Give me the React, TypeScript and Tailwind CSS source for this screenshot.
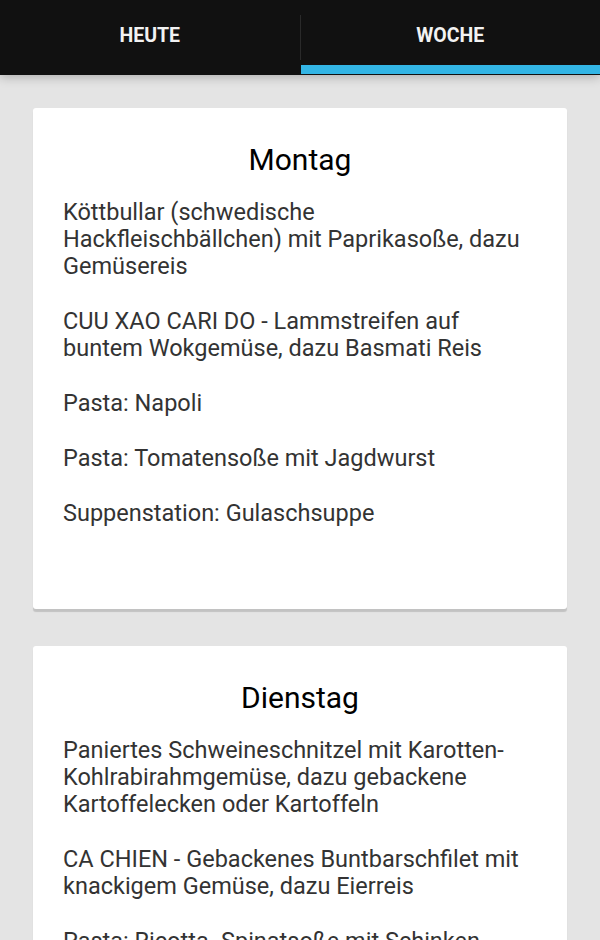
import React from 'react';

const days: { name: string; meals: string[] }[] = [
  {
    name: 'Montag',
    meals: [
      'Köttbullar (schwedische Hackfleischbällchen) mit Paprikasoße, dazu Gemüsereis',
      'CUU XAO CARI DO - Lammstreifen auf buntem Wokgemüse, dazu Basmati Reis',
      'Pasta: Napoli',
      'Pasta: Tomatensoße mit Jagdwurst',
      'Suppenstation: Gulaschsuppe',
    ],
  },
  {
    name: 'Dienstag',
    meals: [
      'Paniertes Schweineschnitzel mit Karotten-Kohlrabirahmgemüse, dazu gebackene Kartoffelecken oder Kartoffeln',
      'CA CHIEN - Gebackenes Buntbarschfilet mit knackigem Gemüse, dazu Eierreis',
      'Pasta: Ricotta- Spinatsoße mit Schinken',
      'Pasta: Napoli',
      'Suppenstation: Kartoffelsuppe',
    ],
  },
];

export default function App() {
  return (
    <div className="h-[940px] overflow-hidden bg-[#e4e4e4] font-['Roboto',sans-serif]">
      {/* Tabs */}
      <div className="relative flex h-[75px] bg-[#111111] shadow-[0_2px_10px_rgba(0,0,0,0.25)]">
        <div className="flex flex-1 items-center justify-center pb-[4px] text-[19.5px] font-bold text-[#f2f2f2]">
          HEUTE
        </div>
        <div className="my-[15px] w-px bg-[#2a2a2a]" />
        <div className="relative flex flex-1 items-center justify-center pb-[4px] text-[19.5px] font-bold text-[#f2f2f2]">
          WOCHE
          <div className="absolute bottom-[1px] left-0 right-0 h-[9px] bg-[#33b5e5]" />
        </div>
      </div>

      <div className="flex flex-col gap-[37px] px-[33px] pt-[33px]">
        {days.map(day => (
          <div
            key={day.name}
            className="rounded-[3px] bg-white px-[30px] pb-[82px] pt-[32px] shadow-[0_3px_1px_rgba(0,0,0,0.15)]"
          >
            <div className="text-center text-[30px] leading-[40px] text-black">{day.name}</div>
            <div className="mt-[19px] flex flex-col gap-[28px]">
              {day.meals.map(m => (
                <p key={m} className="text-[23.5px] leading-[27px] text-[#333333]">
                  {m}
                </p>
              ))}
            </div>
          </div>
        ))}
      </div>
    </div>
  );
}
